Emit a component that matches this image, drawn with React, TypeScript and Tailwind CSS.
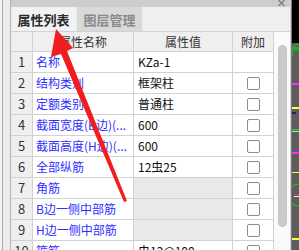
import React from "react";

type Row = { n: string; name: string; val: string; cb: boolean; dis?: boolean };

const rows: Row[] = [
  { n: "1", name: "名称", val: "KZa-1", cb: false },
  { n: "2", name: "结构类别", val: "框架柱", cb: true },
  { n: "3", name: "定额类别", val: "普通柱", cb: true },
  { n: "4", name: "截面宽度(B边)(...", val: "600", cb: true },
  { n: "5", name: "截面高度(H边)(...", val: "600", cb: true },
  { n: "6", name: "全部纵筋", val: "12虫25", cb: true },
  { n: "7", name: "角筋", val: "", cb: true, dis: true },
  { n: "8", name: "B边一侧中部筋", val: "", cb: true, dis: true },
  { n: "9", name: "H边一侧中部筋", val: "", cb: true, dis: true },
  { n: "10", name: "箍筋", val: "虫12@100", cb: true },
];

const font = { fontFamily: '"Noto Sans CJK SC", "Microsoft YaHei", sans-serif' };

function Checkbox() {
  return <div className="w-[13px] h-[13px] border border-[#8c8c8c] rounded-[2px] bg-white" />;
}

export default function App() {
  return (
    <div className="relative w-[299px] h-[250px] overflow-hidden flex bg-[#ececec]" style={font}>
      {/* left strip */}
      <div className="w-[11px] h-full flex shrink-0 bg-[#ededed]">
        <div className="w-[2px] h-full bg-[#f4f4f4]" />
        <div className="w-[1px] h-full bg-[#a8a8a8]" />
        <div className="w-[7px] h-full bg-[#ececec]" />
        <div className="w-[1px] h-full bg-[#b4b4b4]" />
      </div>

      {/* panel */}
      <div className="w-[279px] h-full shrink-0 flex flex-col bg-[#f0f0f0] overflow-hidden">
        {/* title bar */}
        <div className="h-[7px] shrink-0 bg-[#cdcdcd] flex justify-end pr-[5px] overflow-hidden">
          <svg width="7" height="6" viewBox="0 0 7 6">
            <path d="M0.5 0 L6.5 6 M6.5 0 L0.5 6" stroke="#7d7d7d" strokeWidth="1.3" />
          </svg>
        </div>
        {/* tabs */}
        <div className="h-[24px] shrink-0 flex items-stretch pl-[1px] gap-[2px] bg-[#efefef]">
          <div className="w-[63px] bg-[#f2f2f2] flex items-center justify-center text-[13px] font-bold text-[#2a2a2a] leading-none">
            属性列表
          </div>
          <div className="w-[65px] bg-[#d9d9d9] flex items-center justify-center text-[13px] font-bold text-[#8a8a8a] leading-none">
            图层管理
          </div>
        </div>
        {/* table + scrollbar */}
        <div className="flex flex-1 min-h-0 overflow-hidden border-t border-[#d2d2d2]">
          <div className="w-[263px] shrink-0 flex flex-col">
            {/* header */}
            <div className="flex h-[20px] shrink-0 bg-[#efefef] border-b border-[#d2d2d2] text-[12px] text-[#333]">
              <div className="w-[22px] border-r border-[#d2d2d2]" />
              <div className="w-[101px] border-r border-[#d2d2d2] flex items-center justify-center">属性名称</div>
              <div className="w-[99px] border-r border-[#d2d2d2] flex items-center justify-center">属性值</div>
              <div className="w-[41px] border-r border-[#d2d2d2] flex items-center justify-center">附加</div>
            </div>
            {rows.map((r) => (
              <div key={r.n} className="flex h-[21px] shrink-0 border-b border-[#d2d2d2] text-[12px]">
                <div className="w-[22px] border-r border-[#d2d2d2] bg-[#efefef] flex items-center justify-center text-[13px] text-[#333]">
                  {r.n}
                </div>
                <div className="w-[101px] border-r border-[#d2d2d2] bg-white flex items-center pl-[3px] text-[#2f2fff] whitespace-nowrap overflow-hidden">
                  {r.name}
                </div>
                <div
                  className={
                    "w-[99px] border-r border-[#d2d2d2] flex items-center pl-[4px] text-[#111] whitespace-nowrap overflow-hidden " +
                    (r.dis ? "bg-[#e9e9e9]" : "bg-white")
                  }
                >
                  {r.val}
                </div>
                <div className="w-[41px] border-r border-[#d2d2d2] bg-white flex items-center justify-center">
                  {r.cb ? <Checkbox /> : null}
                </div>
              </div>
            ))}
          </div>
          {/* scrollbar */}
          <div className="w-[16px] shrink-0 bg-[#fafafa] flex justify-center pt-[13px]">
            <div className="w-[9px] h-[182px] shrink-0 rounded-full bg-[#c9c9c9]" />
          </div>
        </div>
      </div>

      {/* right border */}
      <div className="w-[1px] h-full shrink-0 bg-[#d0d0d0]" />
      <div className="w-[1px] h-full shrink-0 bg-[#7a7a7a]" />

      {/* CAD canvas strip */}
      <div className="w-[7px] h-full shrink-0">
        <svg width="7" height="250" viewBox="0 0 7 250">
          <rect x="0" y="0" width="7" height="250" fill="#5c5c5c" />
          <rect x="0" y="0" width="7" height="43" fill="#000" />
          <path d="M7 44 A8 8 0 0 0 1 56" stroke="#22c022" strokeWidth="1.2" fill="none" />
          <rect x="2" y="47" width="5" height="4" fill="#1faa1f" />
          <rect x="0" y="83" width="7" height="2" fill="#ff2cff" />
          <rect x="0" y="107" width="7" height="2" fill="#ffff30" />
          <rect x="0" y="112" width="4" height="2" fill="#2a1a6a" />
          <rect x="0" y="129" width="7" height="1" fill="#34d034" />
          <rect x="0" y="131" width="7" height="1" fill="#b0f0b0" />
          <rect x="0" y="152" width="7" height="2" fill="#ff2cff" />
          <rect x="0" y="172" width="7" height="1" fill="#ffff30" />
          <path d="M7 184 A10 10 0 0 0 7 206" stroke="#22c022" strokeWidth="1.2" fill="none" />
          <rect x="2" y="194" width="5" height="1" fill="#e04040" />
          <rect x="2" y="196" width="5" height="1" fill="#f0f0f0" />
          <rect x="0" y="238" width="7" height="2" fill="#ffff30" />
        </svg>
      </div>

      {/* red arrow annotation */}
      <svg className="absolute left-0 top-0 pointer-events-none" width="299" height="250" viewBox="0 0 299 250">
        <polygon
          points="56,29 73,48 67,51 127,201 124,202 61,54 51,57"
          fill="#f01e1e"
        />
      </svg>
    </div>
  );
}
